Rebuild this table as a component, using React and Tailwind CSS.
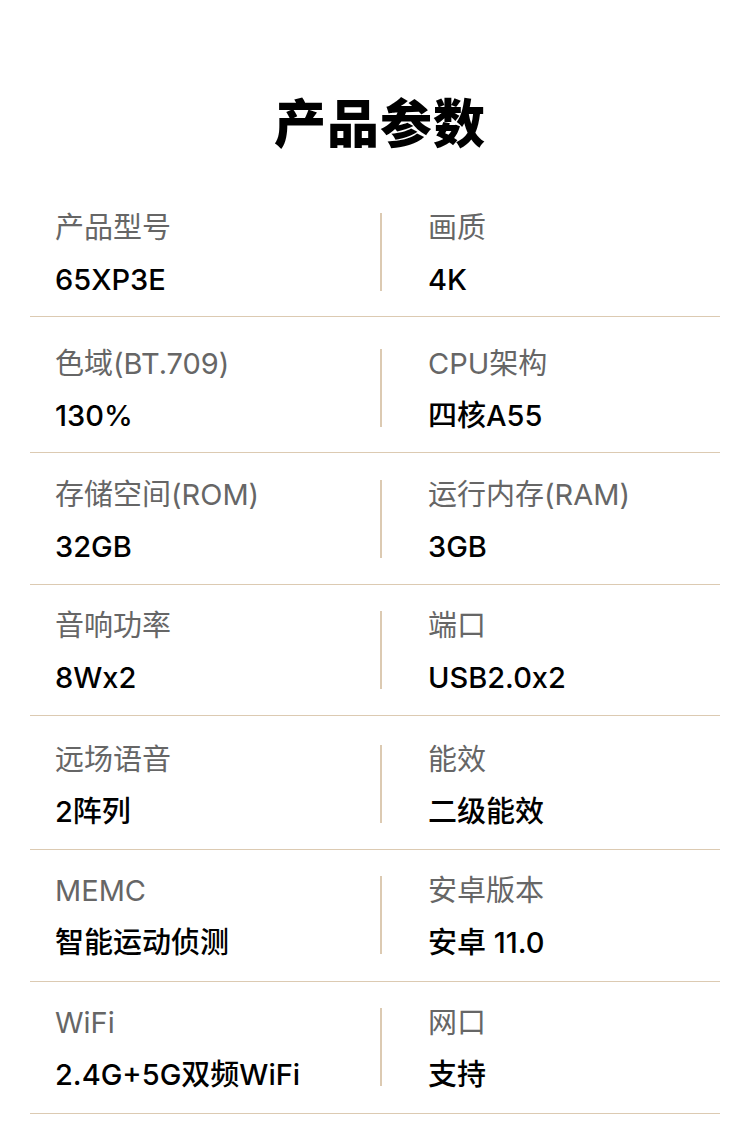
import React from "react";

const specs = [
  { h: "h-[132px]", pt: "pt-[27px]", l1: "产品型号", v1: "65XP3E", l2: "画质", v2: "4K" },
  { h: "h-[136px]", pt: "pt-[31px]", l1: "色域(BT.709)", v1: "130%", l2: "CPU架构", v2: "四核A55" },
  { h: "h-[132px]", pt: "pt-[26px]", l1: "存储空间(ROM)", v1: "32GB", l2: "运行内存(RAM)", v2: "3GB" },
  { h: "h-[131px]", pt: "pt-[25px]", l1: "音响功率", v1: "8Wx2", l2: "端口", v2: "USB2.0x2" },
  { h: "h-[134px]", pt: "pt-[28px]", l1: "远场语音", v1: "2阵列", l2: "能效", v2: "二级能效" },
  { h: "h-[132px]", pt: "pt-[25px]", l1: "MEMC", v1: "智能运动侦测", l2: "安卓版本", v2: "安卓 11.0" },
  { h: "h-[132px]", pt: "pt-[25px]", l1: "WiFi", v1: "2.4G+5G双频WiFi", l2: "网口", v2: "支持" },
];

function Cell({ label, value, right }) {
  return (
    <div className={right ? "pl-[46px]" : "pl-[25px]"}>
      <div className="text-[29px] leading-[32px] text-[#666666] whitespace-nowrap">{label}</div>
      <div className="mt-[20px] text-[29px] leading-[32px] font-medium text-black whitespace-nowrap">{value}</div>
    </div>
  );
}

export default function App() {
  return (
    <div
      className="w-[750px] h-[1135px] bg-white overflow-hidden"
      style={{ fontFamily: '"Inter", "Noto Sans CJK SC", sans-serif' }}
    >
      <div className="h-[185px] flex justify-center pt-[94px] pl-[10px]">
        <h1 className="text-[52px] leading-[62px] font-black text-black tracking-[1px]">产品参数</h1>
      </div>
      <div className="mx-[30px]">
        {specs.map((r) => (
          <div key={r.l1} className={`grid grid-cols-[350px_1fr] ${r.h} border-b-[1.5px] border-[#dccab2]`}>
            <div className={r.pt}>
              <Cell label={r.l1} value={r.v1} />
            </div>
            <div className={r.pt}>
              <div className="border-l-2 border-[#dccab2] h-[78px] relative mt-[1px]">
                <div className="absolute left-0 top-[-1px]">
                  <Cell label={r.l2} value={r.v2} right />
                </div>
              </div>
            </div>
          </div>
        ))}
      </div>
    </div>
  );
}
